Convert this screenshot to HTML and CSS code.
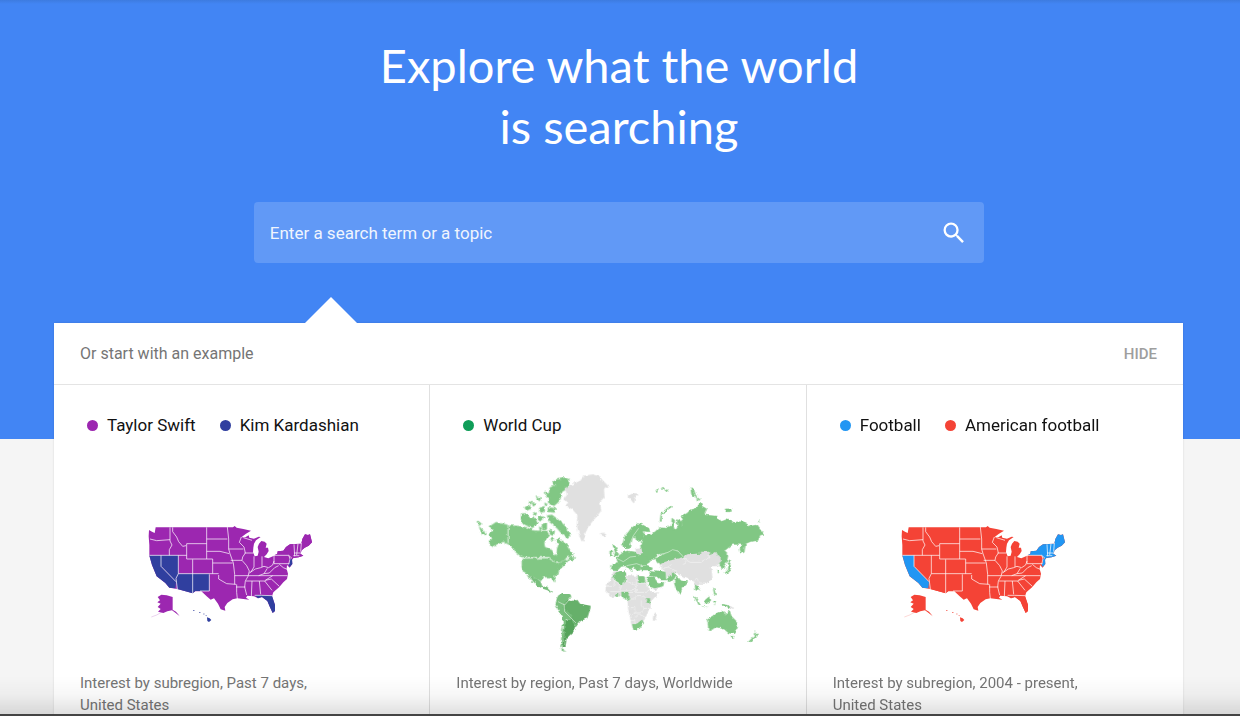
FILE: index.html
```html
<!DOCTYPE html>
<html lang="en">
<head>
<meta charset="utf-8">
<title>Explore what the world is searching</title>
<link rel="stylesheet" href="styles.css">
</head>
<body>
<svg class="defs" aria-hidden="true">
  <defs>
    <filter id="coast" x="-5%" y="-5%" width="110%" height="110%">
      <feTurbulence type="fractalNoise" baseFrequency="0.09" numOctaves="2" seed="4"/>
      <feDisplacementMap in="SourceGraphic" scale="11" xChannelSelector="R" yChannelSelector="G"/>
    </filter>
    <symbol id="usa" viewBox="0 -60 612 405">
      <path class="st-base" d="M27 45L36 50 44 54 47 37H262L279 37 284 33 290 38 310 42 333 47 318 56 304 67 316 67 326 61 328 68 342 71 356 65 362 66 348 76 342 86 340 98 339 112 344 124 353 122 356 110 353 96 357 86 364 78 374 80 380 86 377 98 384 98 386 108 380 118 372 126 385 130 402 122 412 116 413 109 430 107 438 96 450 88 484 86 487 72 495 58 504 60 510 58 516 82 506 92 494 98 485 106 481 116 490 122 476 127 460 129 456 134 457 147 449 158 441 150 440 162 444 176 441 192 430 202 418 216 400 232 396 244 405 270 405 288 398 294 388 272 382 258 366 246 354 250 342 244 322 242 318 248 328 254 310 252 292 250 278 253 262 264 254 276 256 287 242 283 234 266 222 250 212 254 200 244 184 229H166L158 235 112 222 88 218 76 204 50 184 36 150 28 122 28 90 26 64Z"/>
      <path class="st-base" d="M53 246L64 239 80 241 98 246V284L108 290 118 302 104 292 96 286 82 289 70 294 54 290 62 282 53 276 62 266 52 262 60 256Z"/>
      <path class="st-ak" d="M66 291L50 300 34 306M104 290L118 302"/>
      <path class="st-ca" d="M28 121H63V154L108 200 106 220 88 218 76 204 50 184 36 150Z"/>
      <path class="st-nv" d="M63 121H115V176L110 190 108 200 63 154Z"/>
      <path class="st-sw" d="M115 176H208V228H166L158 235 112 222 108 200 110 188Z"/>
      <path class="st-fl" d="M344 240H364L396 242 405 270 405 288 398 294 388 272 382 258 366 246 354 250Z"/>
      <path class="st-nj" d="M448 132L456 132 457 147 449 156 446 148 450 142Z"/>
      <path class="st-ne" d="M404 120L412 116 413 109 430 107 438 96 450 88 484 86 487 72 495 58 504 60 510 58 516 82 506 92 494 98 485 106 481 116 490 122 476 127 460 129 456 134 446 121Z"/>
      <path class="st-hi" d="M201 307L209 310 214 315 207 321 202 318ZM160 285h3v3h-3zM178 291h3v3h-3zM189 296h5v2h-5zM196 300l4 1-1 3z"/>
      <path class="st-lines" d="M30 72L50 77 90 74M90 37V78L96 90 88 104V121M28 121H140M98 37V50L110 66 116 80 128 94 138 92M140 86H200M140 86V132H218V176M200 37V132M115 121V176M158 133V236M115 176H236M63 121V154L108 200M115 176L108 190 112 222M208 178V228H180M200 109H240L268 116M218 144H278M200 72H262M262 36L266 72V102L270 116 280 144 284 178V208M266 102H310M272 136H306M284 182H326M236 180V192L260 206 288 208M288 216H316M290 208V232L292 252M304 66L298 82 312 96 316 114 308 126 306 136 320 152 328 168 324 184 316 198 314 216 320 240M314 114H340M310 68L336 76M342 124V156L332 172M366 124V156M328 174L346 162 362 158 372 154 386 158 398 150 402 138M402 122V146H448M402 121H446L456 130M326 182H442M318 198H376M336 198L334 244M358 198L362 238M344 241H364L396 242M374 198L396 226M376 196L394 192 418 214M376 196L398 182M356 182L372 176 388 174 404 158 416 152M372 176L382 160M418 148L430 158 444 164M462 88L464 124M474 86L470 120M484 84L482 110M462 114H484M460 122H478M446 121L450 132 446 148"/>
    </symbol>
  </defs>
</svg>

<header class="hero">
  <h1 class="title">Explore what the world<br>is searching</h1>
  <form class="search" role="search">
    <input class="search-input" type="text" placeholder="Enter a search term or a topic" aria-label="Enter a search term or a topic">
    <button class="search-button" type="button" aria-label="Search">
      <svg class="search-icon" viewBox="0 0 24 24"><path d="M15.5 14h-.79l-.28-.27A6.47 6.47 0 0 0 16 9.5 6.5 6.5 0 1 0 9.5 16c1.61 0 3.09-.59 4.23-1.57l.27.28v.79l5 4.99L20.49 19l-4.99-5zm-6 0C7.01 14 5 11.99 5 9.5S7.01 5 9.5 5 14 7.01 14 9.5 11.99 14 9.5 14z"/></svg>
    </button>
  </form>
</header>

<main class="content">
  <section class="panel">
    <div class="panel-head">
      <h2 class="panel-title">Or start with an example</h2>
      <button class="hide" type="button">HIDE</button>
    </div>
    <div class="cards">
      <article class="card">
        <ul class="legend">
          <li class="term purple">Taylor Swift</li>
          <li class="term indigo">Kim Kardashian</li>
        </ul>
        <div class="map"><svg class="us us-music" role="img" aria-label="United States"><use href="#usa"/></svg></div>
        <p class="caption">Interest by subregion, Past 7 days, <span class="place">United States</span></p>
      </article>
      <article class="card">
        <ul class="legend">
          <li class="term green">World Cup</li>
        </ul>
        <div class="map">
          <svg class="world" viewBox="-6 0 900 585" role="img" aria-label="Worldwide">
            <g filter="url(#coast)">
              <g class="g1 thick">
                <path d="M60 184L78 172 113 180V232L128 244 100 230 86 236 70 246 62 240 58 228 68 220 56 208 62 202 70 198ZM24 168L34 176 28 182ZM28 186L40 196 46 208 36 208ZM115 182L150 184 170 188 188 196 204 198 230 196 236 210 222 232 224 246 246 256 252 272 260 268 262 250 266 240 258 226 268 218 278 232 290 238 300 256 310 268 290 276 284 284 266 292 252 292 238 276H156L138 262 128 246 115 232Z"/>
                <path d="M298 44L284 38 262 44 248 52 256 62 240 68 238 84 226 92 240 100 234 112 252 122 264 112 272 98 270 84 286 74 296 58ZM232 152L246 150 262 162 278 176 290 190 300 212 290 218 274 204 262 190 248 178 236 168ZM154 146L170 146 178 158 196 160 202 176 188 188 168 180 154 172Z"/>
                <path d="M164 128L176 120 184 130 170 136ZM198 96L212 98 208 108ZM186 112L196 118 190 124ZM208 130L222 124 224 140 212 142ZM204 152L222 156 216 168 206 166ZM234 128L256 130 254 142 234 140ZM216 178L230 172 230 190 218 192ZM240 196L254 198 250 212 240 208ZM226 78L234 84 228 92ZM190 142L200 144 196 152ZM296 274L314 278 308 286ZM208 186L216 190 210 196ZM224 114L232 118 226 122ZM176 112L184 110 182 118ZM242 218L252 222 246 228Z"/>
                <path d="M156 281H236L252 292 262 298 276 290 290 284 302 278 290 292 270 308 264 326 252 336 256 350 250 346 242 336 220 336 212 348 200 340 182 333 162 320 156 306Z"/>
              </g>
              <g class="g2" transform="translate(60 270)">
                <path d="M118 62L140 70 152 80 158 96 170 94 178 102 188 114 172 106 158 101 144 94 130 80ZM110 60L116 62 128 82 124 80Z"/>
                <path d="M204 122L216 114 238 114 244 124 226 146 232 168 250 190 258 212 250 224 244 196 228 192 222 240 216 278 228 290 216 288 212 268 218 214 218 184 206 168 196 148Z"/>
              </g>
              <g class="g3" transform="translate(60 270)"><path d="M222 146L232 134 246 138 262 134 270 146 302 152 300 164 292 190 272 198 260 212 252 202 244 186 232 168 222 160Z"/></g>
              <g class="g4" transform="translate(60 270)"><path d="M228 194L244 194 256 212 250 230 240 240 230 250 226 276 218 276 222 240 224 212Z"/></g>
              <path class="gray" d="M280 104L290 90 284 70 306 58 334 44 342 32 370 28 390 34 396 44 416 64 402 74 404 96 390 110 394 136 384 150 370 166 354 186 346 208 340 230 332 224 326 204 320 180 322 150 306 132 284 122 296 112ZM388 206L402 203 410 208 400 215Z"/>
              <g class="g1 thick" transform="translate(390 0)">
                <path d="M122 240L130 214 126 200 134 208 150 210 166 200 178 188 198 190 216 182 224 194 248 184 244 154 260 146 270 136 290 130 300 114 306 124 320 132 312 150 350 154 364 170 384 162 400 172 430 170 450 184 472 180 492 208 480 210 474 226 450 230 436 236 432 262 424 266 420 252 428 238 398 238 372 258 384 270 380 290 366 312 356 290 352 264 336 266 330 272 290 266 250 276 232 256 204 262 172 268 164 282 140 284 120 272 124 262Z"/>
                <path d="M68 240L74 216 94 190 112 176 124 178 146 190 150 200 128 198 128 226 110 230 106 212 96 222 92 246 80 252ZM38 240L46 244 56 270 42 274 46 262ZM30 258L38 258 36 270 30 270ZM50 278L70 262 82 258 110 262 120 272 140 276 150 290 136 300 122 302 120 316 110 316 100 304 94 308 96 320 80 302 64 304 50 318 34 316 36 298 54 296Z"/>
                <path d="M216 160L224 166 220 196 214 190ZM232 164L246 170 246 190 232 188ZM272 68L282 76 288 96 276 94ZM290 96L300 104 292 108ZM376 132L394 132 392 140 378 140ZM168 76L174 72 170 80ZM184 70L190 67 194 73ZM194 78L204 74 200 80ZM476 168h4v3h-4zM384 292L392 286 388 304Z"/>
                <path d="M164 280L186 268 204 262 218 254 232 258 250 276 256 282 246 300 224 300 200 296 182 300Z"/>
              </g>
              <path class="novaya" d="M572 170L574 150 584 138 604 124"/>
              <path class="gray" d="M472 92L484 88 488 84 506 86 496 98 492 116 482 104ZM496 252L514 250 520 264 500 268Z"/>
              <g transform="translate(390 270)">
                <path class="gray" d="M40 50L34 70 18 92 16 106 34 126 62 122 82 132 84 160 90 190 98 222 118 218 134 192 142 176 152 160 152 140 178 112 158 114 146 100 134 64 112 62 80 60 76 46ZM158 196L160 180 168 170 170 184 164 198ZM180 28L196 20 250 6 262 -2 290 -4 332 0 345 -10 366 16 350 34 334 34 338 76 318 86 302 86 288 96 282 80 262 70 244 62 230 54 200 66 194 48 182 40ZM384 150L402 158 400 162 384 156ZM156 98L186 96 164 106ZM300 -10h30v12h-30z"/>
                <path class="g1" d="M40 64L48 52 76 46 78 80 66 90 34 68ZM114 64H132L137 84H114ZM64 110H88L84 122 92 132 80 134 64 124ZM48 114h6v12h-6zM138 130H150V146L138 142ZM96 208L110 206 126 194 132 204 118 222 100 224ZM120 36L140 33 158 38 156 46 124 46ZM138 66L160 64 176 86 192 80 190 94 164 100 150 96ZM148 48L164 50 168 66 150 62ZM164 46L196 50 200 76 182 76 166 62ZM200 72L220 52 230 64 214 80 204 80ZM222 80L232 62 242 76 264 80 250 96 240 120 226 100ZM284 88L300 100 296 108 286 106ZM314 136L328 124 330 140 316 146ZM362 146L386 150 386 160 372 154ZM280 122L286 126 302 150 296 150ZM302 152L324 156 322 160ZM340 138l8 0-4 14zM338 96L344 106 348 122 342 118ZM386 26L394 34 388 52 370 58 384 44ZM352 42L358 50 354 56Z"/>
                <path class="g1 thick" d="M322 194L340 184 352 174 366 168 376 172 376 184 388 166 394 184 412 202 412 218 402 236 386 234 372 222 350 216 326 226 324 206ZM394 244h8l-4 8zM446 260L462 244 466 246 452 260ZM464 230L472 238 466 246 462 242Z"/>
                <path class="borders" d="M36 72L64 90 80 78 80 60M80 78L108 92 112 62M18 94H40L46 72M30 110H58L64 92M60 108H88L108 100 106 112 88 112M108 92V112L136 112 150 104M112 84H142M84 132H104L108 122H128L136 128M86 158H104V174L88 190M104 174H122L132 160 124 154V136M104 190L118 178 134 186M88 196H104V208M132 160H150M246 8L270 22 300 22 330 6 322 0M250 30L262 12M182 40L206 36 222 48 230 54M206 36L214 28M280 80L290 70 300 86"/>
              </g>
              <path class="borders main" d="M114 178V234M156 278H238L254 290"/>
            </g>
            <path class="borders" d="M264 410L284 420 298 404M282 416L284 440 300 456 318 474M554 280L576 268 594 262 608 254 624 258 642 278M478 240L490 212 506 190M440 280L460 290 480 276 498 274M470 302L500 296 516 302"/>
          </svg>
        </div>
        <p class="caption">Interest by region, Past 7 days, Worldwide</p>
      </article>
      <article class="card">
        <ul class="legend">
          <li class="term blue">Football</li>
          <li class="term red">American football</li>
        </ul>
        <div class="map"><svg class="us us-sport" role="img" aria-label="United States"><use href="#usa"/></svg></div>
        <p class="caption">Interest by subregion, 2004 - present, <span class="place">United States</span></p>
      </article>
    </div>
  </section>
</main>
<div class="fade"></div>
</body>
</html>
```

FILE: styles.css
```css
* { box-sizing: border-box; }

body {
  margin: 0;
  min-height: 100vh;
  display: flex;
  flex-direction: column;
  background: #f5f5f5;
  color: #212121;
  font-family: Roboto, "Liberation Sans", sans-serif;
}

.defs { position: absolute; width: 0; height: 0; }

.hero {
  display: flex;
  flex-direction: column;
  align-items: center;
  padding: 35px 2px 176px 0;
  background: linear-gradient(#3d7be0, #4285f4 4px);
}

.title {
  margin: 0 0 45px;
  color: #fff;
  font-family: Lato, sans-serif;
  font-size: 47px;
  font-weight: 400;
  line-height: 61px;
  text-align: center;
}

.search {
  display: flex;
  align-items: center;
  width: 59%;
  min-width: 300px;
  height: 61px;
  padding: 0 16px;
  border-radius: 4px;
  background: #6199f6;
}

.search-input {
  flex: 1;
  min-width: 0;
  padding: 0;
  border: 0;
  outline: 0;
  background: none;
  color: #fff;
  font: 17px/22px Roboto, sans-serif;
}

.search-input::placeholder { color: #fff; opacity: .9; }

.search-button {
  display: flex;
  padding: 0;
  border: 0;
  background: none;
  cursor: pointer;
}

.search-icon { width: 28px; height: 28px; fill: #fff; }

.content {
  flex: 1;
  display: flex;
  margin-top: -116px;
  padding: 0 57px 0 54px;
}

.panel {
  position: relative;
  flex: 1;
  display: flex;
  flex-direction: column;
  background: #fff;
  box-shadow: 0 0 2px rgba(0, 0, 0, .12);
}

/* pointer towards the search box */
.panel::before {
  content: "";
  position: absolute;
  left: 251px;
  bottom: 100%;
  border: 26px solid transparent;
  border-top-width: 0;
  border-bottom-color: #fff;
}

.panel-head {
  display: flex;
  align-items: center;
  justify-content: space-between;
  height: 62px;
  padding: 0 26px;
  border-bottom: 1px solid #e4e4e4;
}

.panel-title {
  margin: 0;
  color: #757575;
  font-size: 16px;
  font-weight: 400;
}

.hide {
  padding: 0;
  border: 0;
  background: none;
  color: #9e9e9e;
  font: 500 15px/20px Roboto, sans-serif;
  cursor: pointer;
}

.cards {
  flex: 1;
  display: grid;
  grid-template-columns: repeat(3, 1fr);
}

.card { padding: 28px 26px 0; }
.card:not(:last-child) { border-right: 1px solid #e0e0e0; }

.legend {
  display: flex;
  gap: 24px;
  margin: 0;
  padding: 0 0 0 7px;
  list-style: none;
}

.term {
  display: flex;
  align-items: center;
  gap: 9px;
  color: #111;
  font-size: 17px;
  line-height: 24px;
  white-space: nowrap;
}

.term::before {
  content: "";
  width: 11px;
  height: 11px;
  border-radius: 50%;
  background: currentColor;
}

.purple::before { background: #9c27b0; }
.indigo::before { background: #303f9f; }
.green::before { background: #0f9d58; }
.blue::before { background: #2196f3; }
.red::before { background: #f44336; }

.map {
  display: flex;
  align-items: center;
  justify-content: center;
  height: 195px;
  margin: 28px 0 12px;
}

.us { width: 204px; height: 135px; }
.world { width: 300px; height: 195px; }

.us-music {
  --base: #9c27b0;
  --ca: #303f9f;
  --nv: #303f9f;
  --sw: #303f9f;
  --fl: #303f9f;
  --nj: #303f9f;
  --ne: #9c27b0;
  --hi: #303f9f;
}

.us-sport {
  --base: #f44336;
  --ca: #2196f3;
  --nv: #f44336;
  --sw: #f44336;
  --fl: #f44336;
  --nj: #2196f3;
  --ne: #2196f3;
  --hi: #f44336;
}

.st-base { fill: var(--base); }
.st-ca { fill: var(--ca); }
.st-nv { fill: var(--nv); }
.st-sw { fill: var(--sw); }
.st-fl { fill: var(--fl); }
.st-nj { fill: var(--nj); }
.st-ne { fill: var(--ne); }
.st-hi { fill: var(--hi); }
.st-ak { fill: none; stroke: var(--base); stroke-width: 2; opacity: .3; }
.st-lines { fill: none; stroke: #fff; stroke-width: 3; opacity: .7; }

.g1 { fill: #81c784; }
.g2 { fill: #79bf7d; }
.g3 { fill: #66b06a; }
.g4 { fill: #55a35a; }
.thick { stroke: #81c784; stroke-width: 2; }
.gray { fill: #e0e0e0; }
.novaya { fill: none; stroke: #81c784; stroke-width: 5; }
.borders { fill: none; stroke: #fff; stroke-width: 2; opacity: .7; }
.main { stroke-width: 3; }

.caption {
  margin: 0;
  color: #757575;
  font-size: 15px;
  line-height: 22px;
}

.place { white-space: nowrap; }

.card:not(:nth-child(2)) .caption { max-width: 280px; }

.fade {
  position: fixed;
  right: 0;
  bottom: 0;
  left: 0;
  height: 40px;
  border-bottom: 2px solid #444;
  background: linear-gradient(rgba(0, 0, 0, 0), rgba(0, 0, 0, .03) 50%, rgba(0, 0, 0, .12));
  pointer-events: none;
}
```
